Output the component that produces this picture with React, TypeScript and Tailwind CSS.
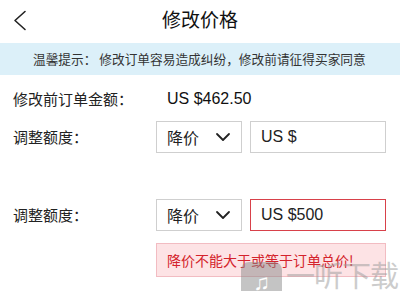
import React from "react";

const cjk = { fontFamily: '"Noto Sans CJK SC", "Noto Sans", sans-serif' };
const lat = { fontFamily: '"Liberation Sans", "Noto Sans CJK SC", sans-serif' };

function Chevron() {
  return (
    <svg width="16" height="10" viewBox="0 0 16 10" fill="none">
      <path d="M2 2 L8 8 L14 2" stroke="#222" strokeWidth="1.8" strokeLinecap="round" strokeLinejoin="round" />
    </svg>
  );
}

function Row({ error, value }: { error?: boolean; value: string }) {
  return (
    <div className="flex items-center h-[32px]">
      <div className="w-[156px] pl-[13px] text-[15px] text-[#222]" style={cjk}>调整额度：</div>
      <div className="w-[86px] h-full border border-[#cfcfcf] bg-white flex items-center justify-between pl-[10px] pr-[10px]">
        <span className="text-[16px] text-[#222]" style={cjk}>降价</span>
        <Chevron />
      </div>
      <div
        className={
          error
            ? "ml-[8px] w-[136px] h-full border border-[#d8414a] bg-white flex items-center pl-[10px]"
            : "ml-[8px] w-[136px] h-full border border-[#cfcfcf] bg-white flex items-center pl-[10px]"
        }
      >
        <span className="text-[16px] text-[#222]" style={lat}>{value}</span>
      </div>
    </div>
  );
}

export default function App() {
  return (
    <div className="relative w-[400px] h-[291px] bg-white overflow-hidden">
      <div className="relative h-[43px] flex items-center justify-center">
        <svg className="absolute left-[12px] top-[10px]" width="16" height="21" viewBox="0 0 16 21" fill="none">
          <path d="M13 1.5 L3 10.5 L13 19.5" stroke="#222" strokeWidth="1.6" strokeLinecap="round" strokeLinejoin="round" />
        </svg>
        <span className="text-[19px] text-[#111] -mt-[4px]" style={cjk}>修改价格</span>
      </div>
      <div className="h-[32px] bg-[#dcf0f9] flex items-center pl-[33px] text-[12.7px] text-[#333]" style={cjk}>
        温馨提示：&nbsp;修改订单容易造成纠纷，修改前请征得买家同意
      </div>
      <div className="mt-[8px] flex items-center h-[32px]">
        <div className="w-[156px] pl-[13px] text-[15px] text-[#222]" style={cjk}>修改前订单金额：</div>
        <div className="pl-[11px] text-[16px] text-[#111]" style={lat}>US $462.50</div>
      </div>
      <div className="mt-[6px]">
        <Row value="US $" />
      </div>
      <div className="mt-[46px]">
        <Row error value="US $500" />
      </div>
      <div className="mt-[12px] ml-[156px] w-[230px] h-[34px] bg-[#fde3e5] border border-[#f2bcc2] flex items-center pl-[10px]">
        <span className="text-[14px] text-[#d4232c]" style={cjk}>降价不能大于或等于订单总价!</span>
      </div>

      <div className="absolute left-[241px] top-[262px] w-[41px] h-[40px] rounded-[8px] bg-[#8a8a8a] opacity-50 flex items-center justify-center">
        <span className="text-white text-[22px] font-bold" style={lat}>♫</span>
      </div>
      <div className="absolute left-[286px] top-[253px] text-[29px] text-[#9a9a9a] opacity-50 tracking-[-1px]" style={cjk}>
        一听下载
      </div>
    </div>
  );
}
